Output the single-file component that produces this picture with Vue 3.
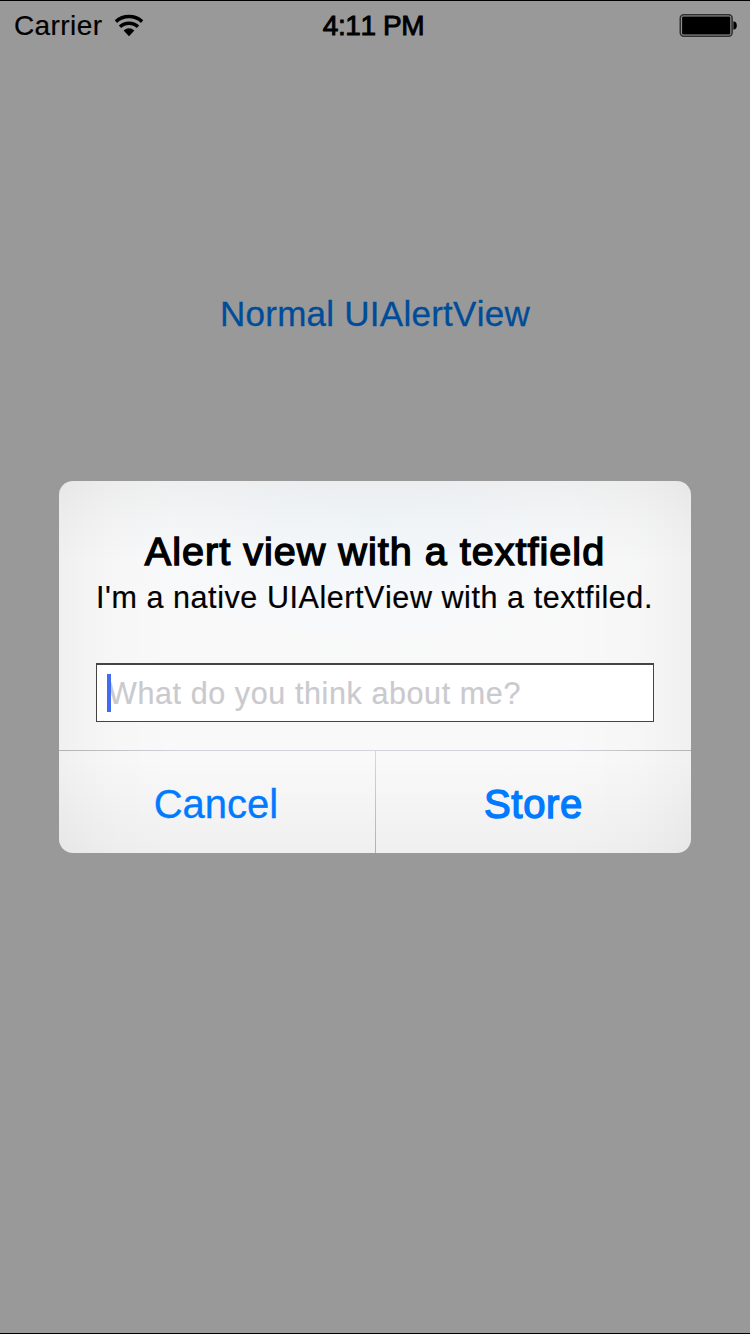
<script setup>
import { ref } from 'vue'

const time = ref('4:11 PM')
const answer = ref('')
</script>

<template>
  <div class="screen">
    <header class="status">
      <div class="left">
        <span class="carrier">Carrier</span>
        <svg class="wifi" width="30" height="23" viewBox="0 0 30 23">
          <g fill="none" stroke="#000" stroke-width="3.5">
            <path d="M1.9 7.6C9.3 .9 20.7 .9 28.1 7.6" />
            <path d="M6 12.8C11 8 19 8 24 12.8" />
          </g>
          <path d="M9.6 16.5Q15 12.1 20.4 16.5L15 22.2Z" />
        </svg>
      </div>
      <span class="time">{{ time }}</span>
      <div class="right">
        <svg class="battery" width="58" height="24" viewBox="0 0 58 24">
          <rect x="1.3" y=".8" width="51.8" height="21.4" rx="3.4" fill="#999" stroke="#303030" stroke-width="1.6" />
          <rect x="3.1" y="2.5" width="48.2" height="18" rx="1.2" />
          <path d="M54.4 7.3C56.8 7.5 57.8 9 57.8 11.5S56.8 15.5 54.4 15.7Z" />
        </svg>
      </div>
    </header>
    <main>
      <button class="link">Normal UIAlertView</button>
    </main>
    <section class="alert" role="dialog">
      <div class="content">
        <h1>Alert view with a textfield</h1>
        <p>I'm a native UIAlertView with a textfiled.</p>
        <div class="field">
          <i class="caret"></i>
          <input v-model="answer" placeholder="What do you think about me?" />
        </div>
      </div>
      <div class="actions">
        <button class="cancel">Cancel</button>
        <button class="store">Store</button>
      </div>
    </section>
  </div>
</template>

<style>
body { margin: 0; }
</style>

<style scoped>
* { box-sizing: border-box; }
.screen {
  position: relative;
  height: 1334px;
  overflow: hidden;
  background: #999;
  border-top: 1px solid #000;
  border-bottom: 1px solid #000;
  font-family: "Liberation Sans", Arial, sans-serif;
  font-kerning: none;
  font-variant-ligatures: none;
  color: #000;
}
button, input {
  margin: 0;
  padding: 0;
  border: 0;
  background: none;
  font: inherit;
  font-kerning: none;
}
.status {
  display: grid;
  grid-template-columns: 1fr auto 1fr;
  align-items: center;
  height: 49px;
  padding: 0 13px 0 14px;
  font-size: 28px;
  line-height: 32px;
}
.left { display: flex; align-items: center; gap: 12px; }
.carrier { letter-spacing: 0.4px; -webkit-text-stroke: 0.2px #000; }
.wifi { margin-top: -1px; }
.time { margin-right: 4px; letter-spacing: -0.4px; -webkit-text-stroke: 0.9px #000; }
.right { display: flex; justify-content: flex-end; }
.battery { display: block; }
main { display: flex; justify-content: center; padding-top: 244px; }
.link {
  height: 40px;
  line-height: 40px;
  font-size: 35px;
  letter-spacing: 0.25px;
  color: #004c99;
  -webkit-text-stroke: 0.3px #004c99;
}
.alert {
  position: absolute;
  left: 59px;
  top: 480px;
  width: 632px;
  height: 372px;
  border-radius: 14px;
  overflow: hidden;
  display: flex;
  flex-direction: column;
  background:
    linear-gradient(to right, rgba(0,0,0,.035), rgba(0,0,0,.012) 8%, transparent 18%, transparent 80%, rgba(0,0,0,.012) 92%, rgba(0,0,0,.035)),
    linear-gradient(to bottom, rgba(0,0,0,.04), rgba(0,0,0,.02) 9%, transparent 22%, transparent 75%, rgba(0,0,0,.04)),
    radial-gradient(ellipse 280px 130px at 50% 12%, #f2f7fb, #f9f9f9);
}
.content {
  height: 269px;
  padding: 48px 37px 0;
  text-align: center;
}
h1 {
  margin: 0;
  font-size: 39.6px;
  line-height: 44px;
  font-weight: 400;
  letter-spacing: 1px;
  white-space: nowrap;
  -webkit-text-stroke: 1.4px #000;
}
p {
  margin: 6px 0 0;
  font-size: 30.5px;
  line-height: 36px;
  letter-spacing: 0.57px;
  white-space: nowrap;
  text-align: left;
  -webkit-text-stroke: 0.2px #000;
}
.field {
  display: flex;
  align-items: center;
  height: 59px;
  margin-top: 48px;
  padding-left: 10px;
  border: 1px solid #444;
  border-top-width: 2px;
  background: #fff;
}
.caret {
  position: relative;
  z-index: 1;
  flex: none;
  width: 4px;
  height: 38px;
  background: #426bf2;
}
input {
  width: 500px;
  height: 40px;
  margin-left: -3px;
  font-size: 30.5px;
  letter-spacing: 0.6px;
  outline: none;
}
input::placeholder { color: #cacace; opacity: 1; -webkit-text-stroke: 0.2px #cacace; }
.actions {
  flex: 1;
  display: flex;
  border-top: 1px solid;
  border-image: linear-gradient(to right, #b2b2b4, #d3d5dc 20%, #d3d5dc 78%, #b5b5b5) 1;
}
.actions button {
  flex: 1;
  font-size: 40px;
  line-height: 44px;
  color: #007aff;
  padding-top: 3px;
}
.actions .cancel { padding-right: 2px; letter-spacing: 0; -webkit-text-stroke: 0.3px #007aff; }
.actions .store {
  flex: 0 0 316px;
  border-left: 1px solid;
  border-image: linear-gradient(#d6d9dc, #b0b0b0) 1;
  letter-spacing: 0.7px;
  -webkit-text-stroke: 1.4px #007aff;
}
</style>
